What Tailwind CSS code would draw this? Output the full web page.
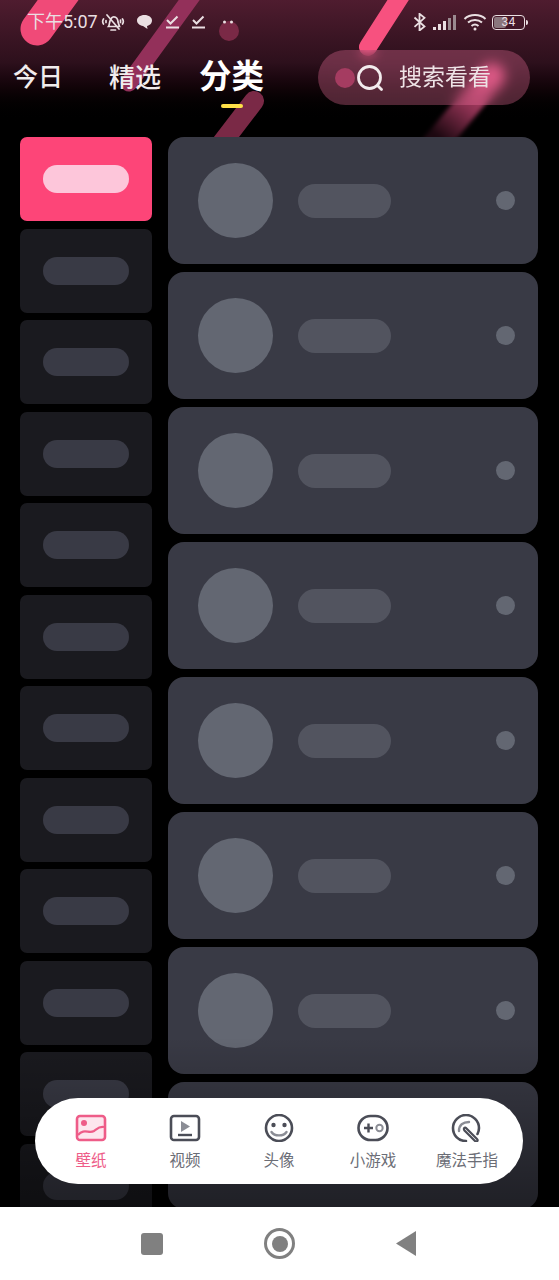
<!DOCTYPE html>
<html lang="zh-CN">
<head>
  <meta charset="UTF-8">
  <meta name="viewport" content="width=device-width, initial-scale=1.0">
  <title>分类</title>
  <script src="https://cdn.jsdelivr.net/npm/@tailwindcss/browser@4"></script>
</head>
<body class="bg-white font-['Roboto','Noto_Sans_CJK_SC',sans-serif]">
  <div class="w-[559px] h-[1280px] flex flex-col overflow-hidden">
    <main class="relative h-[1207px] bg-black overflow-hidden">
      <!-- top glow and streaks -->
      <div class="absolute inset-x-0 top-0 h-[125px] bg-gradient-to-b from-[#4f1c2f] via-[#2d101c] via-50% to-black"></div>
      <svg class="absolute left-0 top-0" width="559" height="160" fill="none" stroke-linecap="round">
        <defs>
          <linearGradient id="fade" gradientUnits="userSpaceOnUse" x1="492" y1="76" x2="440" y2="138">
            <stop offset="0" stop-color="#d04c78"/>
            <stop offset="0.5" stop-color="#8a3050"/>
            <stop offset="1" stop-color="#1c0810"/>
          </linearGradient>
        </defs>
        <line x1="37" y1="29" x2="80" y2="-30" stroke="#f04a78" stroke-width="33"/>
        <line x1="129" y1="83" x2="195" y2="-8" stroke="#93305a" stroke-width="17"/>
        <circle cx="229" cy="31" r="10" fill="#7a2946"/>
        <line x1="368" y1="47" x2="402" y2="-6" stroke="#f7517f" stroke-width="18"/>
        <line x1="254" y1="101" x2="205" y2="165" stroke="#7a2946" stroke-width="20"/>
        <line x1="492" y1="76" x2="432" y2="148" stroke="url(#fade)" stroke-width="26" class="blur-[2px]"/>
      </svg>

      <div class="relative">
        <!-- status bar -->
        <div class="h-[44px] pl-[27px] pr-[31px] flex items-center text-[18px] text-[#eadfe2]">
          <span class="leading-none">下午5:07</span>
          <svg class="ml-[3px]" width="24" height="22" viewBox="0 0 24 22" fill="none" stroke="#eadfe2" stroke-width="1.700" stroke-linecap="round">
            <path d="M7.500 15.500c1.500-2 .5-8 4.500-9.500 3.500-.5 5 2 5 5l1.500 4.500z"/>
            <path d="M10 19h4.500M6 4l12 14M2.500 8c-1 1.500-1 3.500 0 5M5 9.500v2M21.500 8c1 1.500 1 3.500 0 5M19.500 9v2.500"/>
          </svg>
          <svg class="ml-[11px]" width="17" height="16" viewBox="0 0 17 16" fill="#eadfe2"><path d="M8.500 1c4.400 0 7.500 2.400 7.500 5.500s-2.500 5-5 5.500l.5 3-4.500-3C3.500 11.300 1 9.300 1 6.500 1 3.400 4.100 1 8.500 1z"/></svg>
          <svg class="ml-[12px]" width="16" height="16" viewBox="0 0 16 16" fill="none" stroke="#eadfe2" stroke-width="2"><path d="M2 6l3.500 3.500 7-7"/><path d="M1 13.500h13"/></svg>
          <svg class="ml-[10px]" width="16" height="16" viewBox="0 0 16 16" fill="none" stroke="#eadfe2" stroke-width="2"><path d="M2 6l3.500 3.500 7-7"/><path d="M1 13.500h13"/></svg>
          <svg class="ml-[15px]" width="12" height="6" viewBox="0 0 12 6" fill="#eadfe2"><circle cx="2.500" cy="3" r="1.500"/><circle cx="9.500" cy="3" r="1.500"/></svg>
          <div class="ml-auto flex items-center">
            <svg width="13" height="18" viewBox="0 0 13 18" fill="none" stroke="#eadfe2" stroke-width="1.800"><path d="M1.500 4.500l10 9-5 4V.8l5 4-10 9"/></svg>
            <svg class="ml-[6px]" width="25" height="18" viewBox="0 0 25 18" fill="#eadfe2"><rect x="1" y="14" width="3" height="3"/><rect x="6" y="11" width="3" height="6"/><rect x="11" y="8" width="3" height="9"/><rect x="16" y="5" width="3" height="12" fill="#9a8a90"/><rect x="21" y="2" width="3" height="15" fill="#9a8a90"/></svg>
            <svg class="ml-[6px]" width="24" height="18" viewBox="0 0 24 18" fill="none" stroke="#eadfe2" stroke-width="2"><path d="M1.500 6C7 .8 17 .8 22.500 6M5 9.500c4-3.500 10-3.500 14 0M8.500 13c2-1.700 5-1.700 7 0"/><circle cx="12" cy="16" r="1.500" fill="#eadfe2" stroke="none"/></svg>
            <div class="ml-[5px] relative w-[33px] h-[15px] rounded-[4px] border border-[#eadfe2] flex items-center justify-center overflow-hidden">
              <div class="absolute left-[1px] inset-y-[1px] w-[12px] rounded-[2px] bg-[#8a767d]"></div>
              <span class="relative text-[12px] leading-none tracking-wide">34</span>
            </div>
            <div class="ml-[1px] w-[2px] h-[5px] rounded-r bg-[#eadfe2]"></div>
          </div>
        </div>

        <!-- tabs -->
        <div class="h-[93px] flex items-start text-white">
          <div class="ml-[13px] mt-[16px] text-[25px] leading-[36px] font-medium text-[#f1eced]">今日</div>
          <div class="ml-[46px] mt-[16px] text-[26px] leading-[36px] font-medium text-[#f1eced]">精选</div>
          <div class="ml-[38px] mt-[10px] flex flex-col items-center">
            <div class="text-[32.500px] leading-[46px] font-bold">分类</div>
            <div class="mt-[4px] w-[22px] h-[4px] rounded-full bg-[#fde047]"></div>
          </div>
          <div class="ml-auto mr-[29px] mt-[6px] relative w-[212px] h-[55px] rounded-full bg-[#ff7aa8]/30 backdrop-blur-[6px] flex items-center">
            <div class="absolute left-[17px] top-[18px] w-[20px] h-[20px] rounded-full bg-[#a53c61]"></div>
            <svg class="relative ml-[38px]" width="28" height="28" viewBox="0 0 28 28" fill="none" stroke="#f3ecee" stroke-width="2.800" stroke-linecap="round"><circle cx="13.500" cy="13.500" r="11"/><path d="M21.500 21.500l4 4"/></svg>
            <span class="ml-[15px] text-[23px] leading-none text-[#eee3e6]">搜索看看</span>
          </div>
        </div>

        <!-- body -->
        <div class="flex gap-4 pl-5">
          <div id="side" class="w-[132px] flex flex-col gap-[7.500px] shrink-0">
            <div class="h-[84px] rounded-[7px] bg-[#fd4578] flex items-center justify-center shrink-0">
              <div class="w-[86px] h-[28px] rounded-full bg-[#fdc6da]"></div>
            </div>
          </div>
          <div id="list" class="w-[370px] flex flex-col gap-2"></div>
        </div>
      </div>

      <!-- fade under the tab bar -->
      <div class="absolute inset-x-0 bottom-0 h-[170px] bg-gradient-to-b from-transparent to-black/45"></div>

      <!-- floating tab bar -->
      <nav class="absolute left-[35px] top-[1098px] w-[488px] h-[86px] rounded-full bg-white grid grid-cols-5 px-[9px] text-[15.500px] leading-[20px] text-[#6b6d76]">
        <div class="flex flex-col items-center pt-[16px] text-[#ee5c88]">
          <svg width="32" height="28" viewBox="0 0 32 28" fill="none"><rect x="2" y="2" width="28" height="24" rx="3" fill="#fde6ee" stroke="#ee5c88" stroke-width="2.600"/><circle cx="9" cy="9" r="3" fill="#ee5c88"/><path d="M3 21c6-7 11-1 16-4 3-2 5-5 10-4" stroke="#ee5c88" stroke-width="2.200"/></svg>
          <span class="mt-[9px]">壁纸</span>
        </div>
        <div class="flex flex-col items-center pt-[16px]">
          <svg width="32" height="28" viewBox="0 0 32 28" fill="none"><rect x="2" y="2" width="28" height="24" rx="3" stroke="#4b4d57" stroke-width="2.600"/><path d="M12 7l9 5.500-9 5.500z" fill="#8b8d95"/><path d="M9 21h14" stroke="#4b4d57" stroke-width="2.400"/></svg>
          <span class="mt-[9px]">视频</span>
        </div>
        <div class="flex flex-col items-center pt-[16px]">
          <svg width="32" height="28" viewBox="0 0 32 28" fill="none"><circle cx="16" cy="14" r="13" stroke="#4b4d57" stroke-width="2.600"/><circle cx="10.500" cy="11" r="2.200" fill="#4b4d57"/><circle cx="21.500" cy="11" r="2.200" fill="#4b4d57"/><path d="M8.500 18c3 4.500 12 4.500 15 0" stroke="#8b8d95" stroke-width="2.400" stroke-linecap="round"/></svg>
          <span class="mt-[9px]">头像</span>
        </div>
        <div class="flex flex-col items-center pt-[16px]">
          <svg width="32" height="28" viewBox="0 0 32 28" fill="none"><rect x="1.500" y="2" width="29" height="24" rx="12" stroke="#4b4d57" stroke-width="2.600"/><path d="M7 14h9M11.500 9.500v9" stroke="#4b4d57" stroke-width="2.400"/><circle cx="22.500" cy="14" r="3.200" stroke="#8b8d95" stroke-width="2"/></svg>
          <span class="mt-[9px]">小游戏</span>
        </div>
        <div class="flex flex-col items-center pt-[16px]">
          <svg width="32" height="28" viewBox="0 0 32 28" fill="none" stroke-linecap="round"><path d="M15 27C7 27 2 21 2 14 2 7 8 1 15 1s13 6 13 13c0 2-.5 4-1.500 6" stroke="#4b4d57" stroke-width="2.600"/><path d="M8 17c0-6 4-9 10-9" stroke="#8b8d95" stroke-width="2.400"/><path d="M15 14l11 11c1.500 1.500-.5 3.500-2 2L13.500 16.500c-1.500-2 .5-4 1.500-2.500z" fill="#fff" stroke="#4b4d57" stroke-width="2.200"/></svg>
          <span class="mt-[9px]">魔法手指</span>
        </div>
      </nav>
    </main>

    <!-- android nav -->
    <div class="h-[73px] bg-white flex items-start">
      <div class="ml-[141px] mt-[26px] w-[22px] h-[22px] rounded-[3px] bg-[#808080]"></div>
      <div class="ml-[101px] mt-[21px] w-[31px] h-[31px] rounded-full border-[3px] border-[#808080] flex items-center justify-center">
        <div class="w-[16px] h-[16px] rounded-full bg-[#808080]"></div>
      </div>
      <svg class="ml-[100px] mt-[24px]" width="21" height="25" viewBox="0 0 21 25" fill="#808080"><path d="M21 0v25L1 12.500z"/></svg>
    </div>
  </div>

  <script>
    const side = document.getElementById("side");
    const list = document.getElementById("list");
    for (let i = 0; i < 11; i++) {
      side.innerHTML += `
        <div class="h-[84px] rounded-[7px] bg-[#1a1a1f] flex items-center justify-center shrink-0">
          <div class="w-[86px] h-[28px] rounded-full bg-[#393a45]"></div>
        </div>`;
    }
    for (let i = 0; i < 8; i++) {
      list.innerHTML += `
        <div class="h-[127px] rounded-[16px] bg-[#393a45] flex items-center pl-[30px] shrink-0">
          <div class="w-[75px] h-[75px] rounded-full bg-[#636772]"></div>
          <div class="ml-[25px] w-[93px] h-[34px] rounded-full bg-[#52545f]"></div>
          <div class="ml-[105px] w-[19px] h-[19px] rounded-full bg-[#636772]"></div>
        </div>`;
    }
  </script>
</body>
</html>
